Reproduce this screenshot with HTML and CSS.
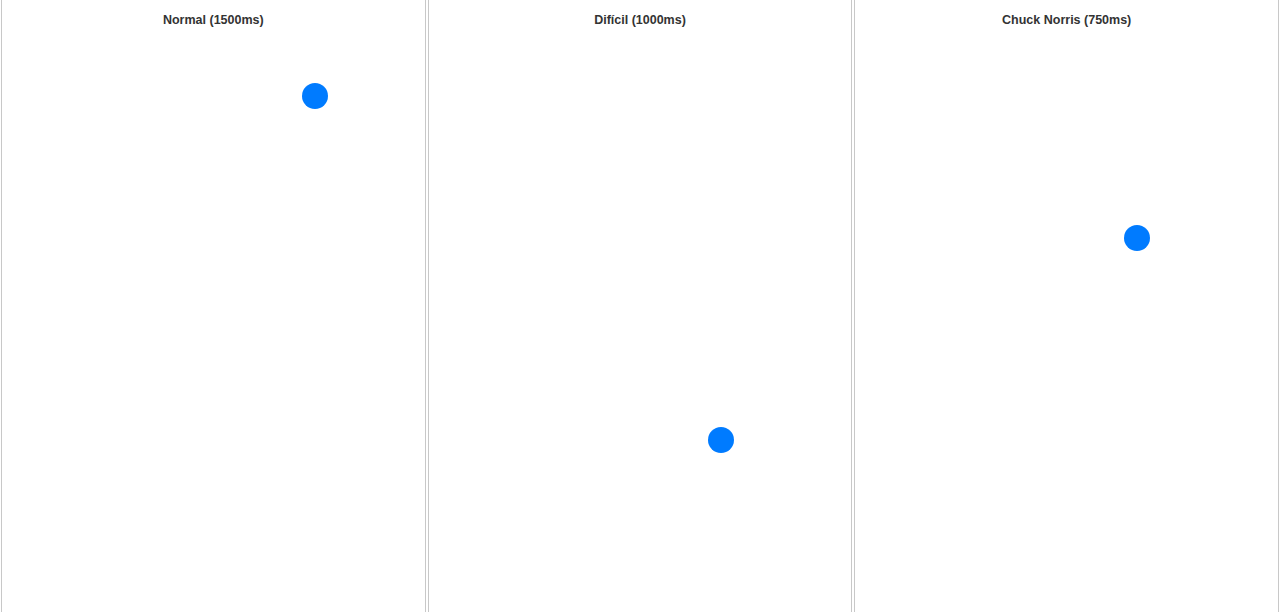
FILE: index.html
```html
<!DOCTYPE html>
<html>
<head>
<meta charset="utf-8">
<link rel="stylesheet" href="styles.css">
</head>
<body>
<div class="board">
  <div class="lane">
    <div class="title">Normal (1500ms)</div>
    <div class="dot" style="left:300px;top:83px"></div>
  </div>
  <div class="lane">
    <div class="title">Difícil (1000ms)</div>
    <div class="dot" style="left:279px;top:427px"></div>
  </div>
  <div class="lane">
    <div class="title">Chuck Norris (750ms)</div>
    <div class="dot" style="left:269px;top:225px"></div>
  </div>
</div>
</body>
</html>
```
FILE: styles.css
```css
html, body {
  margin: 0;
  padding: 0;
  background: #fff;
  overflow: hidden;
}
.board {
  display: flex;
  height: 640px;
}
.lane {
  position: relative;
  flex: 1;
  margin: 0 1px;
  border: 1px solid #c8c8c8;
  border-top: 0;
}
.title {
  padding-top: 12px;
  text-align: center;
  font-family: "Liberation Sans", Arial, sans-serif;
  font-weight: bold;
  font-size: 12.5px;
  line-height: 16px;
  color: #333;
}
.dot {
  position: absolute;
  width: 26px;
  height: 26px;
  border-radius: 50%;
  background: #007bff;
}
```
